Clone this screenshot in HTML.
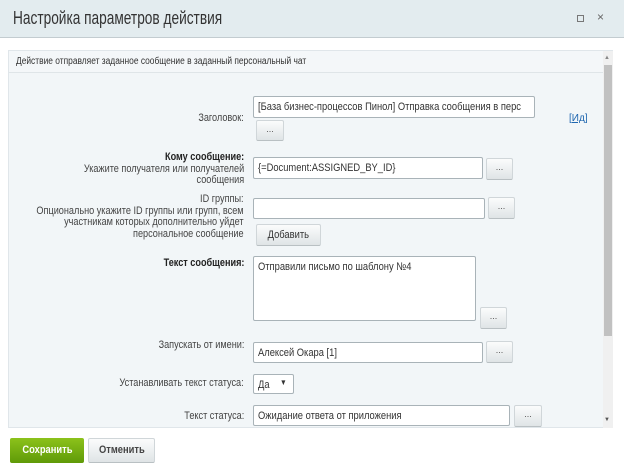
<!DOCTYPE html>
<html><head><meta charset="utf-8"><style>
*{box-sizing:border-box;margin:0;padding:0}
body{width:624px;height:471px;overflow:hidden;background:#fff;font-family:"Liberation Sans",sans-serif;position:relative;color:#333}
.a{position:absolute}
.title{left:0;top:0;width:624px;height:38px;background:#e3ecef;border-bottom:1px solid #c3ccd0}
.title span{position:absolute;left:13px;top:8px;font-size:18px;color:#333;transform:scaleX(.76);transform-origin:left;white-space:nowrap}
.panel{left:8px;top:50px;width:605px;height:378px;background:#f2f6f8;border:1px solid #e0e6ea}
.hdr{left:9px;top:51px;width:594px;height:22px;border-bottom:1px solid #dfe5e8;background:#f4f7f9;font-size:10px;padding:5px 7px}
.hdr span{display:inline-block;transform:scaleX(.84);transform-origin:left;white-space:nowrap}
.sb{left:603px;top:51px;width:10px;height:377px;background:#f0f0f0}
.th{left:604px;top:65px;width:8px;height:271px;background:#c1c1c1}
.lbl{font-size:11px;text-align:right;right:380px;line-height:11.5px;color:#444;transform:scaleX(.83);transform-origin:right;white-space:nowrap}
.b{font-weight:bold;color:#222}
.in{background:#fff;border:1px solid #a9b3b8;border-radius:2px;font-size:11px;padding:4px 4px;white-space:nowrap;overflow:hidden;color:#333}
.in span{display:inline-block;transform:scaleX(.85);transform-origin:left}
.btn{background:linear-gradient(#fbfcfc,#dfe4e6);border:1px solid #d0d6d9;border-bottom-color:#b9c0c3;border-radius:2px;font-size:9px;text-align:center;line-height:16px;color:#555}
</style></head><body>
<div class="a title"><span>Настройка параметров действия</span>
<div class="a" style="left:577px;top:15px;width:7px;height:7px;border:1px solid #777"></div>
<div class="a" style="left:597px;top:10px;font-size:12px;color:#666">×</div></div>
<div class="a panel"></div>
<div class="a hdr"><span>Действие отправляет заданное сообщение в заданный персональный чат</span></div>
<div class="a sb"></div><div class="a th"></div>
<div class="a" style="left:604px;top:55px;font-size:6px;color:#888">▲</div>
<div class="a" style="left:604px;top:417px;font-size:6px;color:#555">▼</div>

<div class="a lbl" style="top:113px">Заголовок:</div>
<div class="a in" style="left:253px;top:96px;width:282px;height:22px"><span>[База бизнес-процессов Пинол] Отправка сообщения в перс</span></div>
<div class="a btn" style="left:256px;top:120px;width:28px;height:21px">...</div>
<div class="a" style="left:569px;top:113px;font-size:10px;color:#2067b0">[<u>Ид</u>]</div>

<div class="a lbl" style="top:152px"><span class="b">Кому сообщение:</span><br>Укажите получателя или получателей<br>сообщения</div>
<div class="a in" style="left:253px;top:157px;width:230px;height:22px"><span>{=Document:ASSIGNED_BY_ID}</span></div>
<div class="a btn" style="left:486px;top:158px;width:27px;height:22px">...</div>

<div class="a lbl" style="top:194px">ID группы:<br>Опционально укажите ID группы или групп, всем<br>участникам которых дополнительно уйдет<br>персональное сообщение</div>
<div class="a in" style="left:253px;top:198px;width:232px;height:21px"></div>
<div class="a btn" style="left:488px;top:197px;width:27px;height:22px">...</div>
<div class="a btn" style="left:256px;top:224px;width:65px;height:22px;font-size:11px;line-height:20px;color:#333"><span style="display:inline-block;transform:scaleX(.85)">Добавить</span></div>

<div class="a lbl b" style="top:258px">Текст сообщения:</div>
<div class="a in" style="left:253px;top:256px;width:223px;height:65px"><span>Отправили письмо по шаблону №4</span></div>
<div class="a btn" style="left:480px;top:307px;width:27px;height:22px">...</div>

<div class="a lbl" style="top:340px">Запускать от имени:</div>
<div class="a in" style="left:253px;top:342px;width:230px;height:21px"><span>Алексей Окара [1]</span></div>
<div class="a btn" style="left:486px;top:341px;width:27px;height:22px">...</div>

<div class="a lbl" style="top:378px">Устанавливать текст статуса:</div>
<div class="a in" style="left:253px;top:374px;width:41px;height:20px"><span>Да</span> <span style="position:absolute;right:5px;top:3px;font-size:8px">▼</span></div>

<div class="a lbl" style="top:411px">Текст статуса:</div>
<div class="a in" style="left:253px;top:405px;width:257px;height:21px"><span>Ожидание ответа от приложения</span></div>
<div class="a btn" style="left:514px;top:405px;width:28px;height:22px">...</div>

<div class="a" style="left:10px;top:438px;width:74px;height:25px;background:linear-gradient(#8cc21b,#5f9a08);border-radius:2px;color:#fff;font-weight:bold;font-size:11px;text-align:center;line-height:25px"><span style="display:inline-block;transform:scaleX(.85)">Сохранить</span></div>
<div class="a btn" style="left:88px;top:438px;width:67px;height:25px;font-weight:bold;font-size:11px;line-height:23px;color:#444"><span style="display:inline-block;transform:scaleX(.85)">Отменить</span></div>
</body></html>
